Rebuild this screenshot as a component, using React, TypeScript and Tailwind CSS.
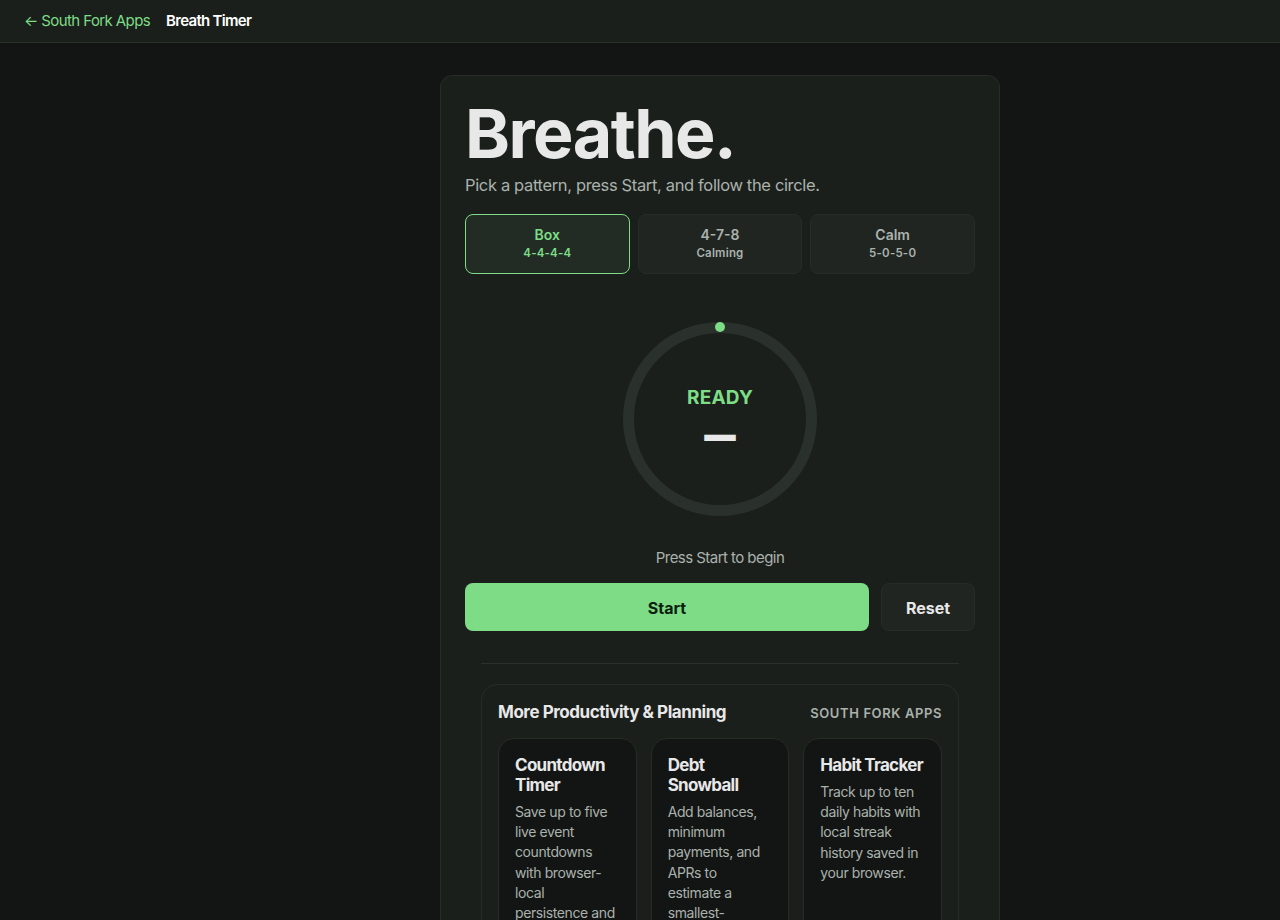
const patterns = [
  { name: 'Box', sub: '4-4-4-4', active: true },
  { name: '4-7-8', sub: 'Calming', active: false },
  { name: 'Calm', sub: '5-0-5-0', active: false },
]

const apps = [
  { name: 'Countdown Timer', text: 'Save up to five live event countdowns with browser-local persistence and shareable links.' },
  { name: 'Debt Snowball', text: 'Add balances, minimum payments, and APRs to estimate a smallest-balance payoff plan.' },
  { name: 'Habit Tracker', text: 'Track up to ten daily habits with local streak history saved in your browser.' },
]

export default function App() {
  return (
    <div className="min-h-screen bg-[#131514] text-[#e8e8e8] font-['Inter',sans-serif]">
      <header className="h-[43px] bg-[#1b1f1c] border-b border-[#2a302b] px-6 pt-[1px] flex items-center gap-4 text-[15px]">
        <a className="text-[#7ddc85] tracking-[-0.6px]">← South Fork Apps</a>
        <span className="font-semibold text-white tracking-[-0.7px]">Breath Timer</span>
      </header>

      <main className="flex justify-center pl-[160px] pt-8 pb-10">
        <div className="w-[560px] bg-[#1b1f1c] border border-[#272c28] rounded-xl p-6">
          <h1 className="text-[68px] leading-[64px] font-bold tracking-[-1.5px] mt-[1px]">Breathe.</h1>
          <p className="mt-[8px] text-[16.5px] leading-6 text-[#aab2ac] tracking-[-0.35px]">Pick a pattern, press Start, and follow the circle.</p>

          <div className="grid grid-cols-3 gap-2 mt-[17px]">
            {patterns.map((p) => (
              <button
                key={p.name}
                className={`h-[60px] pb-[3px] rounded-lg border flex flex-col items-center justify-center ${p.active ? 'bg-[#222c25] border-[#7ddc85] text-[#7ddc85]' : 'bg-[#202522] border-[#272c28] text-[#aab2ac]'}`}
              >
                <span className="text-[14px] leading-[19px] font-semibold">{p.name}</span>
                <span className="mt-[1px] text-[11.5px] leading-4 font-semibold tracking-[0.2px]">{p.sub}</span>
              </button>
            ))}
          </div>

          <div className="flex justify-center mt-[48px]">
            <div className="relative w-[194px] h-[194px] rounded-full border-[11px] border-[#2a302b] flex flex-col items-center">
              <span className="absolute top-[-11px] left-1/2 -translate-x-1/2 w-[10px] h-[10px] rounded-full bg-[#7ddc85]" />
              <span className="mt-[51px] text-[19px] leading-7 font-bold tracking-[0.2px] text-[#7ddc85]">READY</span>
              <span className="mt-[4px] text-[33px] leading-10 font-bold font-['DejaVu_Sans',sans-serif] [-webkit-text-stroke:2px_#e8e8e8]">—</span>
            </div>
          </div>

          <p className="mt-[30px] text-center text-[15px] leading-6 text-[#aab2ac] tracking-[-0.55px]">Press Start to begin</p>

          <div className="flex gap-3 mt-[13px]">
            <button className="flex-1 h-[48px] pt-[1px] rounded-lg bg-[#7ddc85] text-[#0c1f0e] text-[16px] font-bold">Start</button>
            <button className="w-[94px] h-[48px] pt-[1px] rounded-lg bg-[#202522] border border-[#272c28] text-[16px] font-bold">Reset</button>
          </div>

          <div className="mx-4 mt-8 pt-5 border-t border-[#2a302b]">
            <section className="border border-[#272c28] rounded-2xl p-4">
              <div className="flex items-center justify-between h-[24px]">
                <h2 className="text-[17px] font-bold tracking-[-0.45px]">More Productivity &amp; Planning</h2>
                <span className="mt-[1px] text-[13px] font-semibold tracking-[0.6px] text-[#aab2ac]">SOUTH FORK APPS</span>
              </div>
              <div className="grid grid-cols-3 gap-[14px] mt-[13px]">
                {apps.map((a) => (
                  <a key={a.name} className="bg-[#131514] border border-[#272c28] rounded-2xl p-4">
                    <h3 className="text-[17px] leading-5 font-bold tracking-[-0.7px]">{a.name}</h3>
                    <p className="mt-[7px] text-[14px] leading-[20.17px] text-[#aab2ac] tracking-[-0.4px]">{a.text}</p>
                  </a>
                ))}
              </div>
            </section>
          </div>
        </div>
      </main>
    </div>
  )
}
